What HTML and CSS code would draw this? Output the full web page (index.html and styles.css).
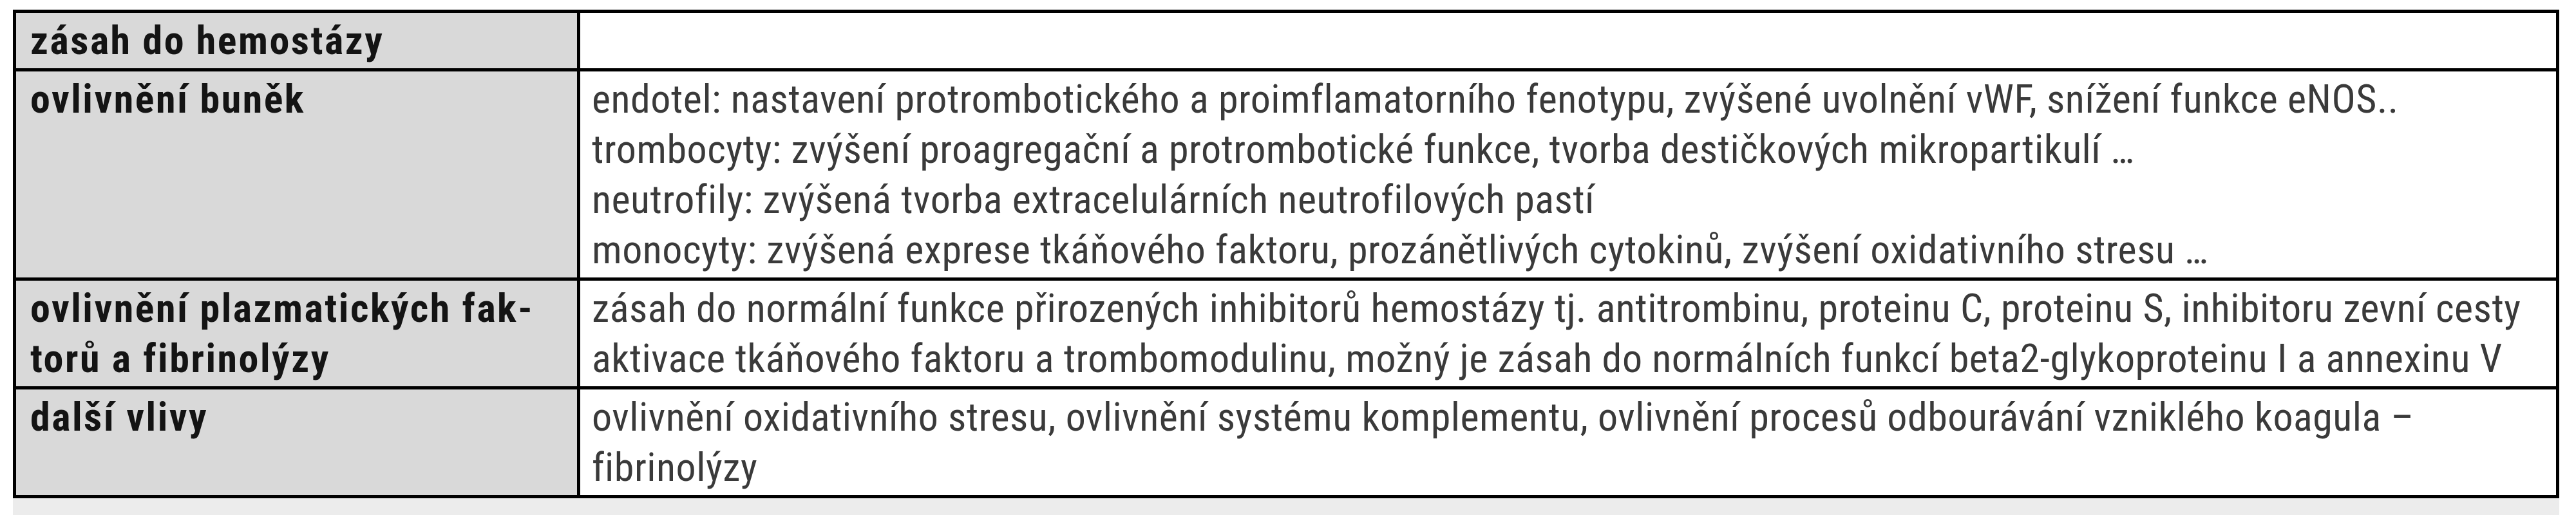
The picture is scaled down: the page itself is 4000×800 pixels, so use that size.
FILE: index.html
```html
<!DOCTYPE html>
<html lang="cs">
<head>
<meta charset="utf-8">
<title>Zásah do hemostázy</title>
<link rel="stylesheet" href="styles.css">
</head>
<body>
<div class="page">
  <div class="tbl">
    <div class="cell head">zásah do hemostázy</div>
    <div class="cell body"></div>

    <div class="cell head">ovlivnění buněk</div>
    <div class="cell body">
      <p>endotel: nastavení protrombotického a proimflamatorního fenotypu, zvýšené uvolnění vWF, snížení funkce eNOS..</p>
      <p>trombocyty: zvýšení proagregační a protrombotické funkce, tvorba destičkových mikropartikulí …</p>
      <p>neutrofily: zvýšená tvorba extracelulárních neutrofilových pastí</p>
      <p>monocyty: zvýšená exprese tkáňového faktoru, prozánětlivých cytokinů, zvýšení oxidativního stresu …</p>
    </div>

    <div class="cell head">ovlivnění plazmatických fak-<br>torů a fibrinolýzy</div>
    <div class="cell body">
      <p>zásah do normální funkce přirozených inhibitorů hemostázy tj. antitrombinu, proteinu C, proteinu S, inhibitoru zevní cesty</p>
      <p>aktivace tkáňového faktoru a trombomodulinu, možný je zásah do normálních funkcí beta2-glykoproteinu I a annexinu V</p>
    </div>

    <div class="cell head">další vlivy</div>
    <div class="cell body">
      <p>ovlivnění oxidativního stresu, ovlivnění systému komplementu, ovlivnění procesů odbourávání vzniklého koagula –<br>fibrinolýzy</p>
    </div>
  </div>
  <div class="foot"></div>
</div>
</body>
</html>
```
FILE: styles.css
```css
html, body {
  margin: 0;
  padding: 0;
  background: #ffffff;
}

.page {
  padding: 15px 0 0 20px;
  width: 3954px;
}

.tbl {
  display: grid;
  grid-template-columns: 871px 1fr;
  grid-template-rows: 86px 320px 164px 164px;
  gap: 5px;
  padding: 5px;
  background: #000000;
}

.cell {
  font-family: "Roboto Condensed", "Roboto", sans-serif;
  font-stretch: condensed;
  font-size: 62px;
  line-height: 78px;
  padding-top: 4px;
  white-space: nowrap;
  overflow: hidden;
}

.cell p {
  margin: 0;
}

.head {
  background: #d9d9d9;
  color: #141414;
  font-weight: 700;
  letter-spacing: 2.5px;
  padding-left: 22px;
}

.body {
  background: #ffffff;
  color: #3a3a3a;
  font-weight: 400;
  letter-spacing: 0.5px;
  padding-left: 18px;
}

.foot {
  height: 40px;
  background: #ececec;
}
```
